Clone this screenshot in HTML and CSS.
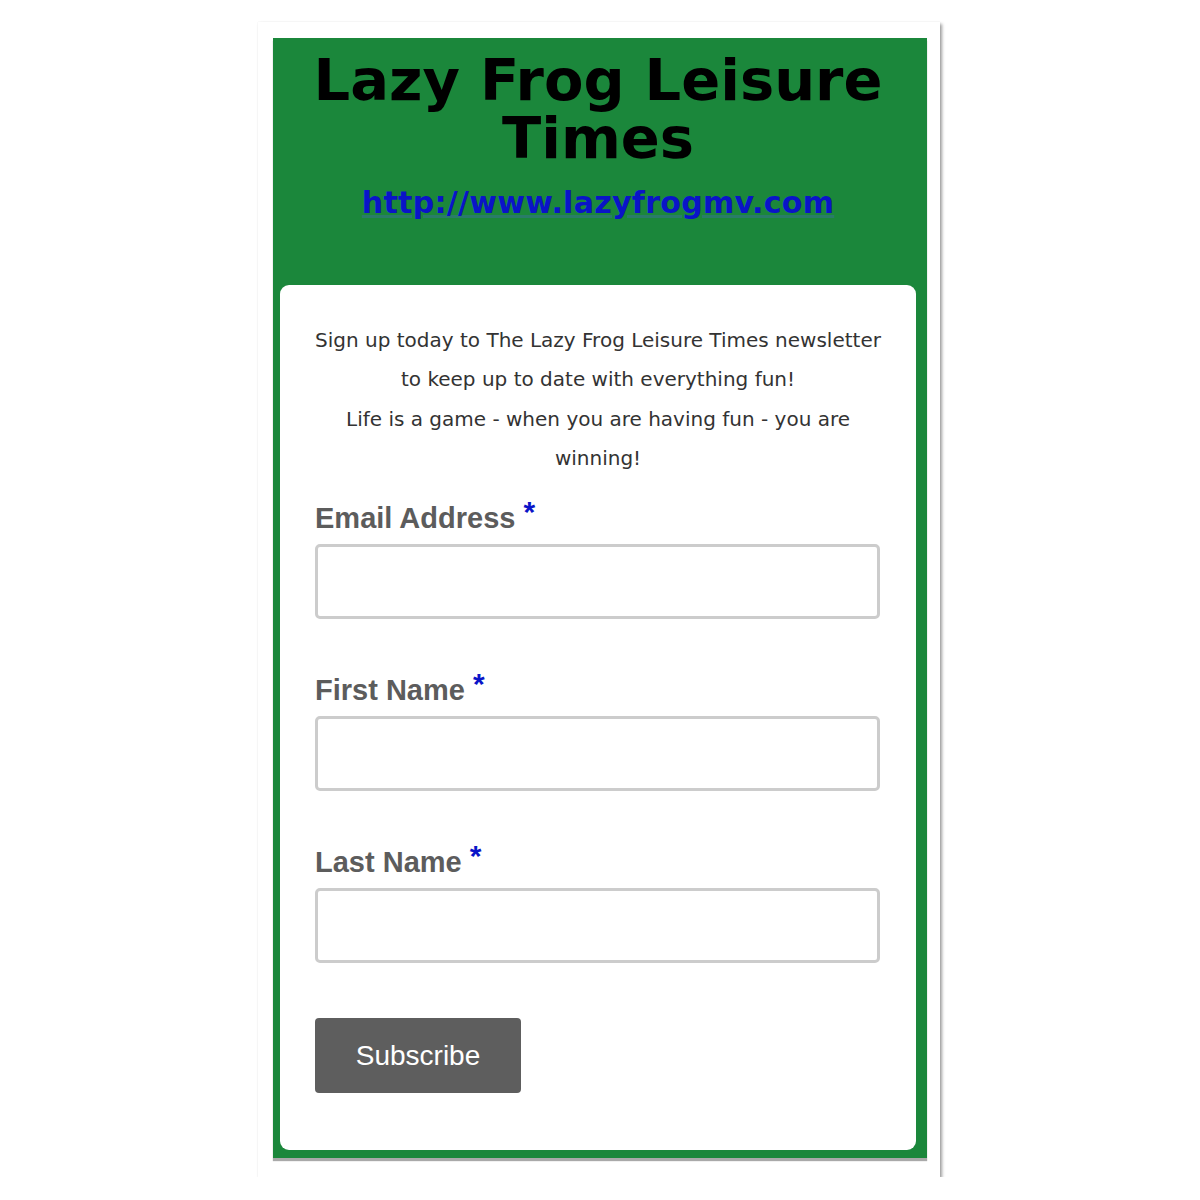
FILE: index.html
```html
<!DOCTYPE html>
<html>
<head>
<meta charset="utf-8">
<title>Lazy Frog Leisure Times</title>
<link rel="stylesheet" href="styles.css">
</head>
<body>
<div class="paper">
  <div class="frame">
    <header class="masthead">
      <h1 class="title">Lazy Frog Leisure Times</h1>
      <a class="site-link" href="#">http://www.lazyfrogmv.com</a>
    </header>
    <main class="card">
      <p class="intro">Sign up today to The Lazy Frog Leisure Times newsletter to keep up to date with everything fun!<br>Life is a game - when you are having fun - you are winning!</p>
      <form class="signup">
        <div class="field">
          <label class="label">Email Address <span class="req">*</span></label>
          <input class="input" type="email">
        </div>
        <div class="field">
          <label class="label">First Name <span class="req">*</span></label>
          <input class="input" type="text">
        </div>
        <div class="field">
          <label class="label">Last Name <span class="req">*</span></label>
          <input class="input" type="text">
        </div>
        <button class="button" type="button">Subscribe</button>
      </form>
    </main>
  </div>
</div>
</body>
</html>
```
FILE: styles.css
```css
html, body {
  margin: 0;
  padding: 0;
  background: #ffffff;
}
body {
  padding: 22px 0 0 258px;
}
.paper {
  width: 682px;
  box-sizing: border-box;
  padding: 16px 13px 19px 15px;
  background: #ffffff;
  box-shadow: 0 0 1px rgba(0,0,0,0.10), 2px 2px 3px rgba(0,0,0,0.38);
}
.frame {
  background: #1b873b;
  padding: 0 11px 8px 7px;
  box-shadow: 0 3px 1px #a9a9a9;
}
.masthead {
  text-align: center;
  padding: 14px 0 64px;
}
.title {
  margin: 0;
  font-family: "DejaVu Sans", Verdana, sans-serif;
  font-weight: bold;
  font-size: 57.5px;
  line-height: 58px;
  color: #000000;
}
.site-link {
  display: inline-block;
  margin-top: 17px;
  font-family: "DejaVu Sans", Verdana, sans-serif;
  font-weight: bold;
  font-size: 30px;
  line-height: 36px;
  letter-spacing: 0.3px;
  color: #0a14c8;
  text-decoration: underline;
  text-decoration-color: rgba(60, 110, 160, 0.45);
  text-underline-offset: 2px;
}
.card {
  background: #ffffff;
  border-radius: 9px;
  padding: 36px 36px 57px 35px;
}
.intro {
  margin: 0 -5px 24px -4px;
  text-align: center;
  font-family: "DejaVu Sans", Verdana, sans-serif;
  font-size: 20px;
  line-height: 39.3px;
  color: #333333;
}
.signup {
  display: flex;
  flex-direction: column;
}
.field {
  display: flex;
  flex-direction: column;
  gap: 10px;
  margin-bottom: 55px;
}
.label {
  font-family: "Liberation Sans", Arial, sans-serif;
  font-weight: bold;
  font-size: 29px;
  line-height: 32px;
  color: #5c5c5c;
}
.req {
  color: #0a14c8;
  font-size: 30px;
  position: relative;
  top: -6px;
}
.input {
  height: 75px;
  box-sizing: border-box;
  border: 3px solid #cccccc;
  border-radius: 5px;
  background: #ffffff;
  margin: 0;
  padding: 0 12px;
  font-size: 20px;
}
.button {
  align-self: flex-start;
  width: 206px;
  height: 75px;
  border: 0;
  border-radius: 4px;
  background: #5e5e5e;
  color: #ffffff;
  font-family: "Liberation Sans", Arial, sans-serif;
  font-size: 28px;
  padding: 0;
}
```
